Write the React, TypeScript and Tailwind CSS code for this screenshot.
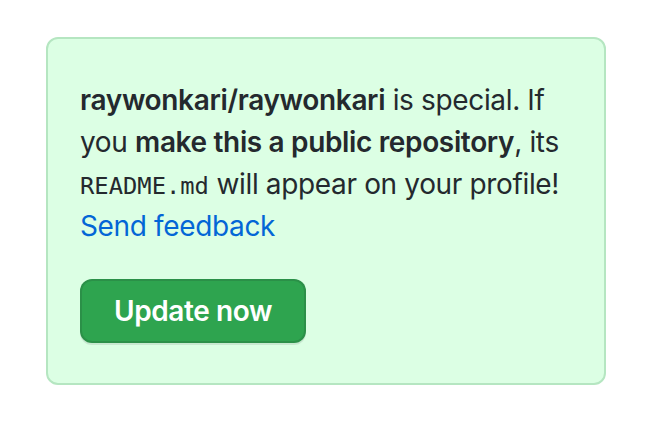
export default function App() {
  return (
    <div className="min-h-[422px] w-[658px] bg-white pl-[46px] pt-[37px] font-['Inter','Noto_Sans',sans-serif] text-[#24292e]">
      <div className="w-[560px] rounded-[12px] border-2 border-[#b5e6c1] bg-[#dcffe4] px-8 py-10">
        <p className="text-[28px] leading-[42px] tracking-[-0.35px]">
          <strong className="font-semibold">raywonkari/raywonkari</strong> is special. If you{' '}
          <strong className="font-semibold">make this a public repository</strong>, its{' '}
          <code className="font-['DejaVu_Sans_Mono','Liberation_Mono',monospace] text-[85%] leading-none tracking-normal">README.md</code> will
          appear on your profile!{' '}
          <a href="#" className="text-[#0366d6]">
            Send feedback
          </a>
        </p>
        <button
          type="button"
          className="mt-8 block h-[64px] rounded-[12px] border-2 border-[rgba(27,31,35,0.15)] bg-[#2ea44f] px-8 text-[28px] font-semibold leading-[40px] tracking-[-0.4px] text-white shadow-[0_2px_0_rgba(27,31,35,0.1)]"
        >
          Update now
        </button>
      </div>
    </div>
  )
}
